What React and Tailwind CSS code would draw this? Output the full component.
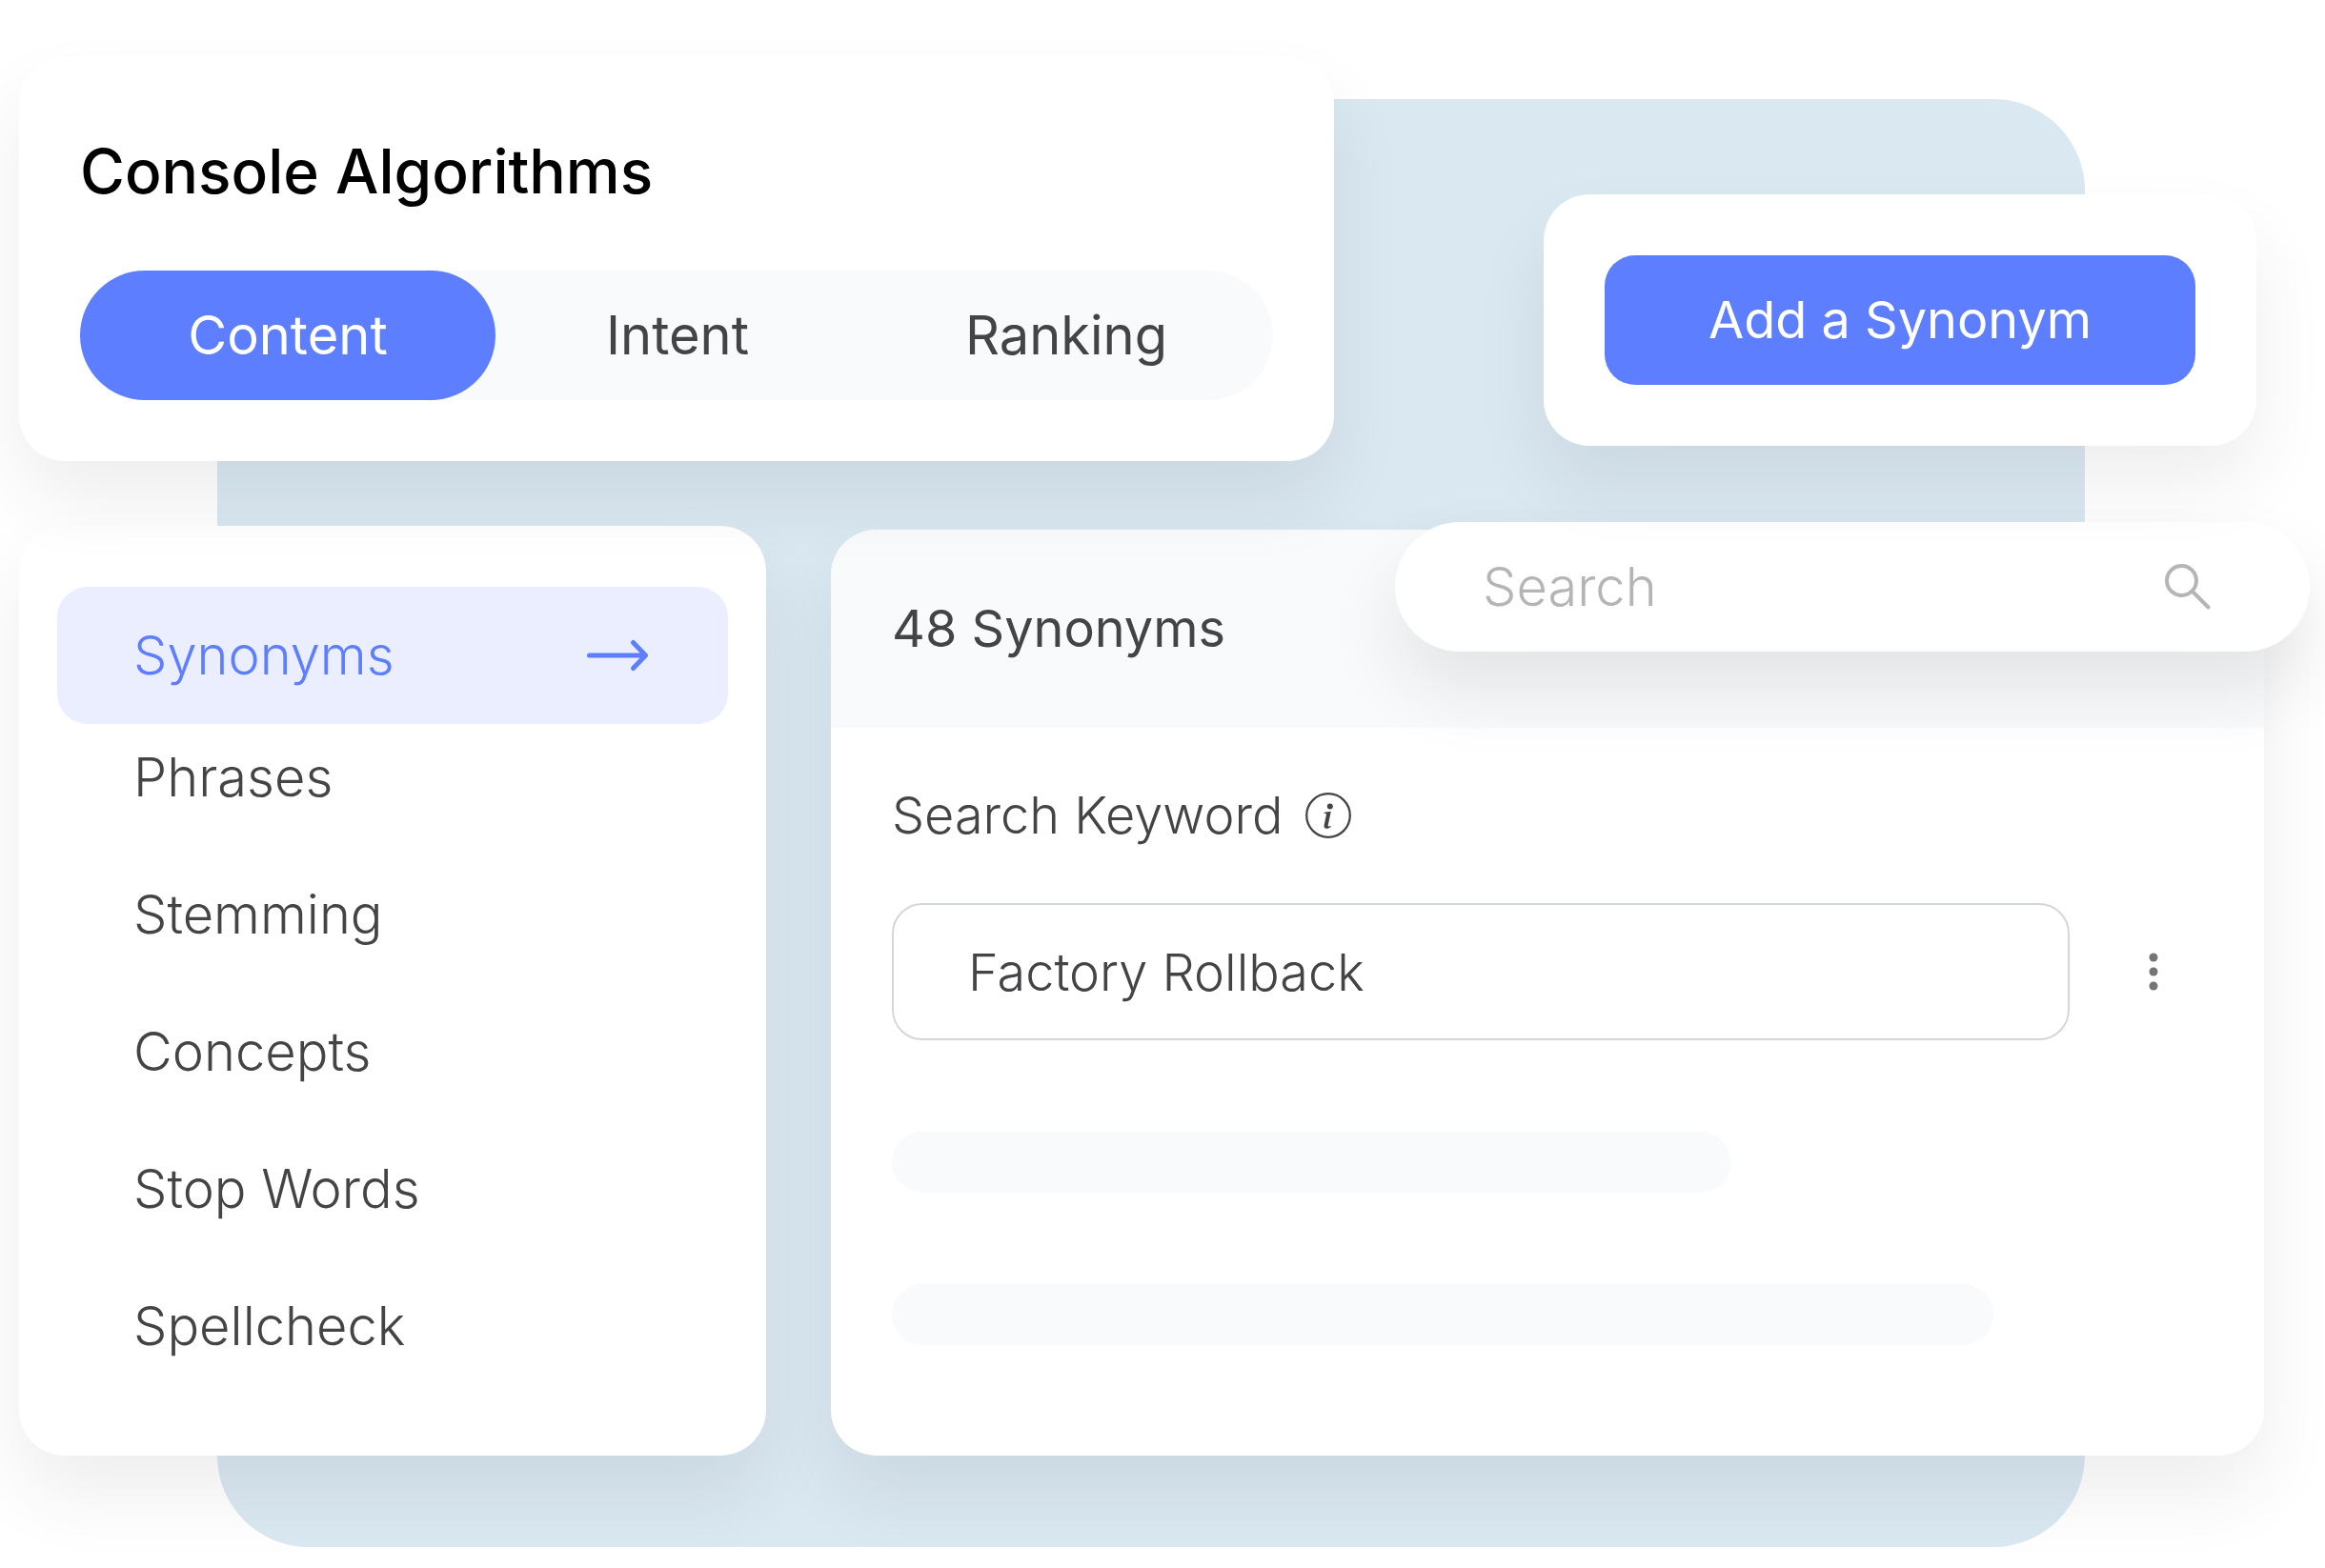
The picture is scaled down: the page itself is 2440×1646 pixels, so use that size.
import React, { useState } from "react";

const tabs = ["Content", "Intent", "Ranking"];
const menu = ["Phrases", "Stemming", "Concepts", "Stop Words", "Spellcheck"];

const ArrowIcon = () => (
  <svg width="68" height="36" viewBox="0 0 68 36" fill="none" stroke="currentColor" strokeWidth="5" strokeLinecap="round" strokeLinejoin="round" aria-hidden="true">
    <path d="M2.5 18H61.5M48.5 4.5L61.5 18L48.5 31.5" />
  </svg>
);

const SearchIcon = () => (
  <svg width="48" height="48" viewBox="0 0 48 48" fill="none" stroke="currentColor" strokeWidth="4" strokeLinecap="round" aria-hidden="true">
    <circle cx="17.5" cy="17.5" r="15.5" />
    <path d="M29 29L45.5 45.5" />
  </svg>
);

const InfoIcon = () => (
  <svg width="48" height="48" viewBox="0 0 16 16" fill="currentColor" aria-hidden="true">
    <circle cx="8" cy="8" r="7.6" fill="none" stroke="currentColor" strokeWidth="0.75" />
    <path d="m8.93 6.588-2.29.287-.082.38.45.083c.294.07.352.176.288.469l-.738 3.468c-.194.897.105 1.319.808 1.319.545 0 1.178-.252 1.465-.598l.088-.416c-.2.176-.492.246-.686.246-.275 0-.375-.193-.304-.533z" />
    <circle cx="8.6" cy="4.8" r="1" />
  </svg>
);

const DotsIcon = () => (
  <svg width="10" height="40" viewBox="0 0 10 40" fill="currentColor" aria-hidden="true">
    <circle cx="5" cy="5" r="4.5" />
    <circle cx="5" cy="20" r="4.5" />
    <circle cx="5" cy="35" r="4.5" />
  </svg>
);

const AlgorithmsCard = () => {
  const [active, setActive] = useState("Content");

  return (
    <section className="relative z-20 bg-white rounded-[48px] px-16 pt-20 pb-16 shadow-[0_40px_80px_rgba(0,0,0,0.07)]">
      <h1 className="text-[64px] leading-[80px] font-medium text-black">Console Algorithms</h1>
      <div role="tablist" className="mt-16 grid grid-cols-[436fr_382fr_434fr] h-34 rounded-full bg-[#f9fafc]">
        {tabs.map((tab) => (
          <button
            key={tab}
            type="button"
            role="tab"
            aria-selected={tab === active}
            onClick={() => setActive(tab)}
            className={`rounded-full text-[56px] leading-[80px] ${
              tab === active ? "bg-[#5c7eff] text-white" : "text-[#444446]"
            }`}
          >
            {tab}
          </button>
        ))}
      </div>
    </section>
  );
};

const Sidebar = () => (
  <nav className="bg-white rounded-[48px] px-10 pt-16 pb-24 text-[56px] leading-[80px] font-light shadow-[0_40px_80px_rgba(0,0,0,0.07)]">
    <a href="#synonyms" aria-current="page" className="flex items-center justify-between h-36 px-20 rounded-[32px] bg-[#eaeeff] text-[#5c7eff]">
      Synonyms
      <ArrowIcon />
    </a>
    <ul className="mt-4 flex flex-col gap-16 px-20 text-[#444446]">
      {menu.map((item) => (
        <li key={item}>
          <a href="#" className="block">{item}</a>
        </li>
      ))}
    </ul>
  </nav>
);

const SynonymsPanel = () => (
  <section className="relative mt-1 bg-white rounded-[48px] text-[54px] leading-[80px] text-[#444446] shadow-[0_40px_80px_rgba(0,0,0,0.07)]">
    <header className="flex items-center h-52 px-16 rounded-t-[48px] bg-[#f9fafc]">
      <h2>48 Synonyms</h2>
    </header>

    <label className="absolute -top-2 -right-12 w-[960px] h-34 flex items-center pl-23 pr-26 rounded-full bg-white text-[#b5b5b5] shadow-[0_40px_80px_rgba(0,0,0,0.09)]">
      <input
        type="text"
        placeholder="Search"
        aria-label="Search synonyms"
        className="flex-1 min-w-0 text-[56px] font-light bg-transparent outline-none placeholder-[#b5b5b5]"
      />
      <SearchIcon />
    </label>

    <div className="px-16 pt-13 font-light">
      <div className="flex items-center gap-6">
        <label htmlFor="keyword">Search Keyword</label>
        <InfoIcon />
      </div>
      <div className="mt-13 flex items-center gap-9">
        <input
          id="keyword"
          type="text"
          defaultValue="Factory Rollback"
          className="flex-1 min-w-0 h-36 px-[78px] rounded-[32px] border-2 border-[#d3d7da] bg-transparent outline-none"
        />
        <button type="button" aria-label="More options" className="flex justify-center w-26 py-6 text-[#757575]">
          <DotsIcon />
        </button>
      </div>
      <div className="mt-24 h-16 w-[64%] rounded-[32px] bg-[#f9fafc]" />
      <div className="mt-24 h-16 w-[84%] rounded-[32px] bg-[#f9fafc]" />
    </div>
  </section>
);

const App = () => (
  <div className="grid min-h-screen overflow-hidden bg-white font-['Inter',sans-serif]">
    {/* blue backdrop, shares the grid cell with the cards */}
    <div className="[grid-area:1/1] mt-26 mb-[22px] ml-57 mr-63 rounded-[96px] bg-[#dae8f2]" />

    <main className="[grid-area:1/1] pt-15 pb-[118px] pl-5 pr-16">
      <div className="mr-2 grid grid-cols-[1380fr_748fr] gap-[220px] items-start">
        <AlgorithmsCard />
        <div className="relative z-20 mt-36 p-16 rounded-[48px] bg-white shadow-[0_40px_80px_rgba(0,0,0,0.07)]">
          <button type="button" className="w-full h-34 rounded-[32px] bg-[#5c7eff] text-white text-[54px] leading-[80px]">
            Add a Synonym
          </button>
        </div>
      </div>

      <div className="mt-17 grid grid-cols-[784fr_1504fr] gap-17">
        <Sidebar />
        <SynonymsPanel />
      </div>
    </main>
  </div>
);

export default App;
